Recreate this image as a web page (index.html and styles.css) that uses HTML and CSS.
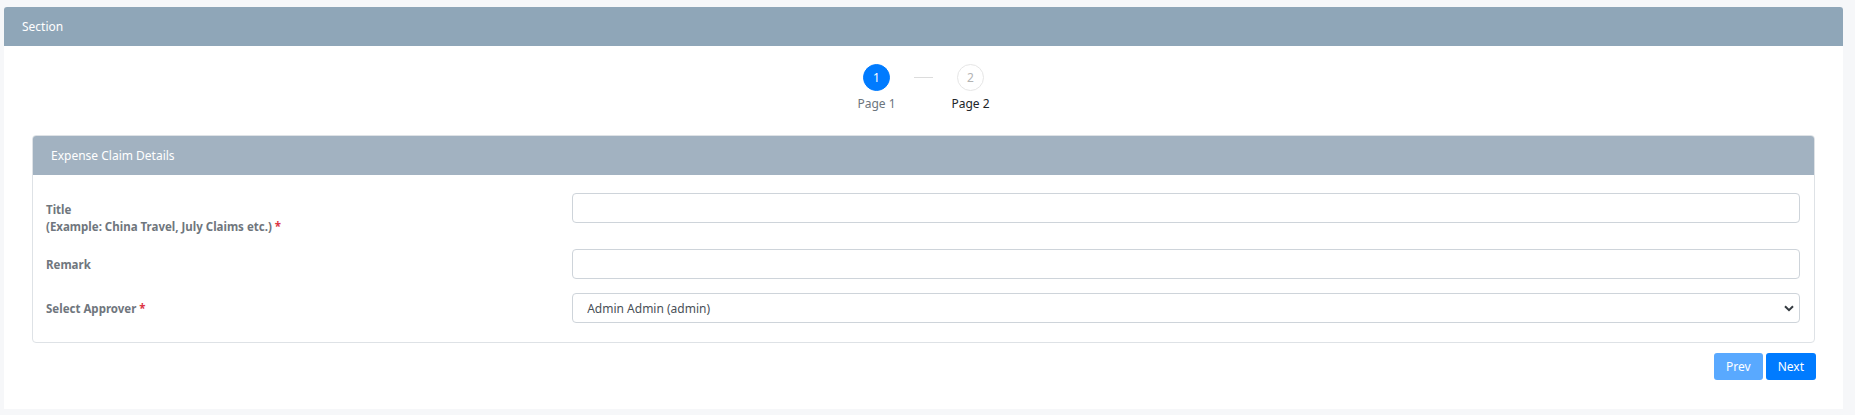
FILE: index.html
```html
<!DOCTYPE html>
<html lang="en">
  <head>
    <title>Expense Claim</title>
    <meta charset="UTF-8">
    <meta name="viewport" content="width=device-width, initial-scale=1.0">
    <link rel="stylesheet" href="styles.css">
  </head>
  <body>
    <div class="panel">
      <div class="panel-heading">Section</div>
      <div class="panel-body">
        <ul class="stepper">
          <li class="step active">
            <span class="step-circle">1</span>
            <span class="step-label">Page 1</span>
          </li>
          <li class="step-line"></li>
          <li class="step next">
            <span class="step-circle">2</span>
            <span class="step-label">Page 2</span>
          </li>
        </ul>

        <div class="card">
          <div class="card-header">Expense Claim Details</div>
          <div class="card-body">
            <div class="form-row">
              <label class="col-label first" for="title">Title<br>(Example: China Travel, July Claims etc.) <span class="req">*</span></label>
              <div class="col-input">
                <input type="text" id="title" class="form-control">
              </div>
            </div>
            <div class="form-row">
              <label class="col-label" for="remark">Remark</label>
              <div class="col-input">
                <input type="text" id="remark" class="form-control">
              </div>
            </div>
            <div class="form-row">
              <label class="col-label" for="approver">Select Approver <span class="req">*</span></label>
              <div class="col-input select-wrap">
                <select id="approver" class="form-control">
                  <option>Admin Admin (admin)</option>
                </select>
                <svg class="chevron" width="10" height="7" viewBox="0 0 10 7">
                  <path d="M1 1.2 L5 5.2 L9 1.2" fill="none" stroke="#343a40" stroke-width="2"/>
                </svg>
              </div>
            </div>
          </div>
        </div>

        <div class="actions">
          <button class="btn btn-primary" disabled>Prev</button>
          <button class="btn btn-primary">Next</button>
        </div>
      </div>
    </div>
  </body>
</html>
```

FILE: styles.css
```css
body {
  margin: 7px 12px 0 4px;
  background: #f6f7f9;
  font-family: "Segoe UI", "Noto Sans", sans-serif;
  font-size: 12px;
  color: #212529;
}

.panel {
  background: white;
  border-radius: 3px 3px 0 0;
  box-shadow: 0 3px 10px rgba(0, 0, 0, 0.13);
}

.panel-heading {
  background: #8fa6b8;
  color: white;
  height: 39px;
  line-height: 39px;
  padding: 0 18px;
  border-radius: 3px 3px 0 0;
}

.panel-body {
  padding: 18px 28px 29px;
}

/* stepper */
.stepper {
  list-style: none;
  margin: 0 0 23px;
  padding: 0;
  display: flex;
  justify-content: center;
  align-items: flex-start;
}

.step {
  width: 56px;
  display: flex;
  flex-direction: column;
  align-items: center;
}

.step-circle {
  width: 27px;
  height: 27px;
  box-sizing: border-box;
  border-radius: 50%;
  display: flex;
  align-items: center;
  justify-content: center;
  background: white;
  border: 1px solid #e6e6e6;
  color: #b3b3b3;
}

.step.active .step-circle {
  background: #007bff;
  border-color: #007bff;
  color: white;
}

.step-label {
  margin-top: 4px;
  line-height: 17px;
  color: #6c757d;
}

.step.next .step-label {
  color: #212529;
}

.step-line {
  width: 19px;
  height: 1px;
  background: #dcdcdc;
  margin: 13px 9.5px 0;
}

/* card */
.card {
  border: 1px solid #dee2e6;
  border-radius: 4px;
}

.card-header {
  background: #a2b2c1;
  color: white;
  height: 39px;
  line-height: 39px;
  padding: 0 18px;
  border-radius: 3px 3px 0 0;
}

.card-body {
  padding: 18px 14px 19px 13px;
}

.form-row {
  display: grid;
  grid-template-columns: 3fr 7fr;
  align-items: start;
  margin-bottom: 14px;
}

.form-row:last-child {
  margin-bottom: 0;
}

.col-label {
  padding-top: 7px;
  line-height: 17px;
  font-size: 11.5px;
  font-weight: bold;
  color: #6f767d;
}

.col-label.first {
  padding-top: 8px;
}

.req {
  color: #dc3545;
}

.form-control {
  display: block;
  width: 100%;
  height: 30px;
  box-sizing: border-box;
  border: 1px solid #ced4da;
  border-radius: 4px;
  padding: 0 14px;
  font-family: inherit;
  font-size: 12px;
  color: #495057;
  background: white;
}

.select-wrap {
  position: relative;
}

.select-wrap select {
  appearance: none;
  -webkit-appearance: none;
}

.chevron {
  position: absolute;
  right: 6px;
  top: 12px;
}

/* buttons */
.actions {
  display: flex;
  justify-content: flex-end;
  gap: 3px;
  margin-top: 10px;
  margin-right: -1px;
}

.btn {
  height: 27px;
  padding: 0 12px;
  border: none;
  border-radius: 3px;
  font-family: inherit;
  font-size: 12px;
  cursor: pointer;
}

.btn-primary {
  background: #007bff;
  color: white;
}

.btn-primary:disabled {
  background: #59a9ff;
  cursor: default;
}
```
